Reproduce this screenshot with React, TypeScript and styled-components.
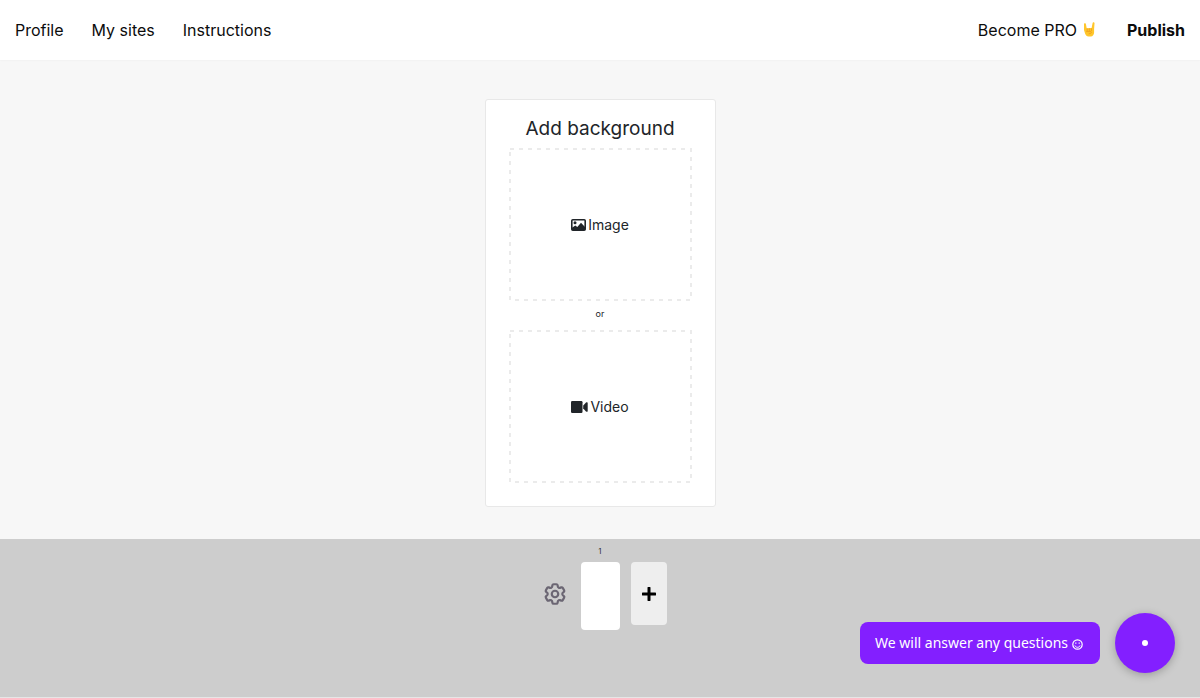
import React from "react";
import styled, { createGlobalStyle } from "styled-components";
import { HiOutlineCog6Tooth } from "react-icons/hi2";

const GlobalStyle = createGlobalStyle`
  *, *::before, *::after { box-sizing: border-box; }
  body {
    margin: 0;
    background: #f7f7f7;
    color: #212529;
    font-family: Inter, "Liberation Sans", sans-serif;
  }
  button { font: inherit; color: inherit; cursor: pointer; }
`;

const Page = styled.div`
  min-height: 100vh;
  display: flex;
  flex-direction: column;
`;

const Header = styled.header`
  display: flex;
  justify-content: space-between;
  align-items: center;
  height: 60px;
  padding: 0 15px;
  background: #fff;
  box-shadow: 0 0 2px rgba(0, 0, 0, 0.06);
`;

const Nav = styled.nav<{ $gap: number }>`
  display: flex;
  align-items: center;
  gap: ${(p) => p.$gap}px;
`;

const NavLink = styled.a<{ $strong?: boolean }>`
  display: inline-flex;
  align-items: center;
  gap: 5px;
  color: #0c0c0c;
  font-size: 16px;
  line-height: 24px;
  font-weight: ${(p) => (p.$strong ? 700 : 400)};
  text-decoration: none;
`;

const Main = styled.main`
  flex: 1;
  display: flex;
  justify-content: center;
  align-items: flex-start;
  padding: 39px 16px 32px;
`;

const Card = styled.section`
  width: 231px;
  padding: 16px 23px 23px;
  display: flex;
  flex-direction: column;
  background: #fff;
  border: 1px solid #e8e8e8;
  border-radius: 3px;
`;

const Title = styled.h1`
  margin: 0 0 7px;
  font-size: 19px;
  line-height: 25px;
  font-weight: 400;
  text-align: center;
`;

const DropZone = styled.button`
  display: flex;
  justify-content: center;
  align-items: center;
  gap: 2px;
  height: 153px;
  padding: 0;
  background: none;
  border: 0;
  font-size: 14px;
  line-height: 20px;
  position: relative;
`;

const Dashes = styled.svg`
  position: absolute;
  inset: 0;
  width: 100%;
  height: 100%;
`;

const Or = styled.div`
  height: 29px;
  padding-top: 4px;
  font-size: 9px;
  line-height: 18px;
  text-align: center;
`;

const Footer = styled.footer`
  height: 159px;
  padding: 8px 16px;
  background: #cdcdcd;
  border-bottom: 1px solid #e6e6e6;
`;

const Tools = styled.div`
  display: grid;
  grid-template-columns: 1fr auto 1fr;
  align-items: center;
  column-gap: 11px;
`;

const Settings = styled.button`
  display: flex;
  justify-self: end;
  margin: 10px 2px 0 0;
  padding: 0;
  background: none;
  border: 0;
  color: #6b6673;
`;

const Slide = styled.button`
  display: flex;
  flex-direction: column;
  align-items: center;
  gap: 5px;
  width: 39px;
  padding: 0;
  background: none;
  border: 0;
  font-size: 7px;
  line-height: 10px;
`;

const Thumb = styled.span`
  width: 100%;
  height: 68px;
  border-radius: 4px;
  background: #fff;
`;

const AddSlide = styled.button`
  display: flex;
  justify-content: center;
  align-items: center;
  width: 36px;
  height: 63px;
  margin-top: 10px;
  padding: 0;
  border: 0;
  border-radius: 4px;
  background: #eee;
`;

const Chat = styled.aside`
  position: fixed;
  right: 25px;
  bottom: 25px;
  display: flex;
  align-items: center;
  gap: 15px;
`;

const ChatHint = styled.div`
  height: 42px;
  padding: 0 17px 0 15px;
  display: flex;
  align-items: center;
  gap: 4px;
  border-radius: 8px;
  background: #831fff;
  color: #fff;
  font-family: "Noto Sans", sans-serif;
  font-size: 14px;
  line-height: 20px;
`;

const ChatButton = styled.button`
  display: flex;
  justify-content: center;
  align-items: center;
  width: 60px;
  height: 60px;
  padding: 0;
  border: 0;
  border-radius: 50%;
  background: #831fff;
  box-shadow: 0 2px 8px rgba(0, 0, 0, 0.25);
`;

const Dot = styled.span`
  width: 6px;
  height: 6px;
  border-radius: 50%;
  background: #fff;
`;

const HornsIcon = () => (
  <svg width="15" height="18" viewBox="0 0 15 18" aria-hidden="true">
    <path
      d="M2.900 2.200c.7 0 1 .5 1.100 1.200l.7 3.900 4.900-.2.900-4.700c.1-.8.5-1.200 1-1.200.8 0 1.100.6 1 1.400l-.4 5.500v3.300c0 1.900-1.500 4-3.200 4H6.600c-1.900 0-3.300-1.700-3.700-3.500L2 9V3.300c0-.8.300-1.100.9-1.100Z"
      fill="#ffc62b"
    />
    <path d="M5.200 7.800v1.900M7.300 7.700v2M9.400 7.800v1.900M4.600 10.600h3.900c1 0 1.300 1.300.3 1.700l-1.800.5" fill="none" stroke="#ec9a1c" strokeWidth=".8" strokeLinecap="round" />
  </svg>
);

const ImageIcon = () => (
  <svg width="15" height="12" viewBox="0 0 15 12" aria-hidden="true">
    <rect x=".8" y=".8" width="13.400" height="10.400" rx="1" fill="none" stroke="#212529" strokeWidth="1.600" />
    <path d="M1 8.800 4.300 6.500l2 1.500L10 3.700l4 4.300v3H1Z" fill="#212529" />
    <circle cx="4" cy="3.700" r="1.500" fill="#212529" />
  </svg>
);

const VideoIcon = () => (
  <svg width="17" height="12" viewBox="0 0 17 12" fill="#212529" aria-hidden="true">
    <rect x="0" y="0" width="11.500" height="12" rx="1.200" />
    <path d="M12.200 4.500 15 1.600c.8-.8 1.700-.5 1.700.5v7.800c0 1-.9 1.300-1.700.5l-2.800-2.900Z" />
  </svg>
);

const SmileIcon = () => (
  <svg width="11" height="13" viewBox="0 -2 11 13" fill="none" stroke="#fff" aria-hidden="true">
    <circle cx="5.500" cy="5.500" r="4.700" strokeWidth="1.200" />
    <path d="M2.900 6.500c.5 1.300 1.500 1.800 2.600 1.800s2.100-.5 2.600-1.800" />
    <path d="M3.800 3.500v1.300M7.200 3.500v1.300" strokeWidth="1.200" />
  </svg>
);

const Outline = () => (
  <Dashes aria-hidden="true">
    <rect x="1" y="1" width="181" height="151" fill="none" stroke="#ebebeb" strokeWidth="2" strokeDasharray="4 5" />
  </Dashes>
);

export default function App() {
  return (
    <Page>
      <GlobalStyle />
      <Header>
        <Nav aria-label="Main" $gap={28}>
          <NavLink href="#profile">Profile</NavLink>
          <NavLink href="#sites">My sites</NavLink>
          <NavLink href="#instructions">Instructions</NavLink>
        </Nav>
        <Nav aria-label="Account" $gap={30}>
          <NavLink href="#pro">
            Become PRO <HornsIcon />
          </NavLink>
          <NavLink href="#publish" $strong>
            Publish
          </NavLink>
        </Nav>
      </Header>
      <Main>
        <Card>
          <Title>Add background</Title>
          <DropZone type="button">
            <Outline />
            <ImageIcon />
            Image
          </DropZone>
          <Or>or</Or>
          <DropZone type="button">
            <Outline />
            <VideoIcon />
            Video
          </DropZone>
        </Card>
      </Main>
      <Footer>
        <Tools>
          <Settings type="button" aria-label="Settings">
            <HiOutlineCog6Tooth size={26} strokeWidth={2} />
          </Settings>
          <Slide type="button">
            1
            <Thumb />
          </Slide>
          <AddSlide type="button" aria-label="Add slide">
            <svg width="14" height="14" viewBox="0 0 14 14" aria-hidden="true">
              <path d="M7 1v12M1 7h12" stroke="#000" strokeWidth="3" strokeLinecap="round" />
            </svg>
          </AddSlide>
        </Tools>
      </Footer>
      <Chat>
        <ChatHint>
          We will answer any questions
          <SmileIcon />
        </ChatHint>
        <ChatButton type="button" aria-label="Open chat">
          <Dot />
        </ChatButton>
      </Chat>
    </Page>
  );
}
